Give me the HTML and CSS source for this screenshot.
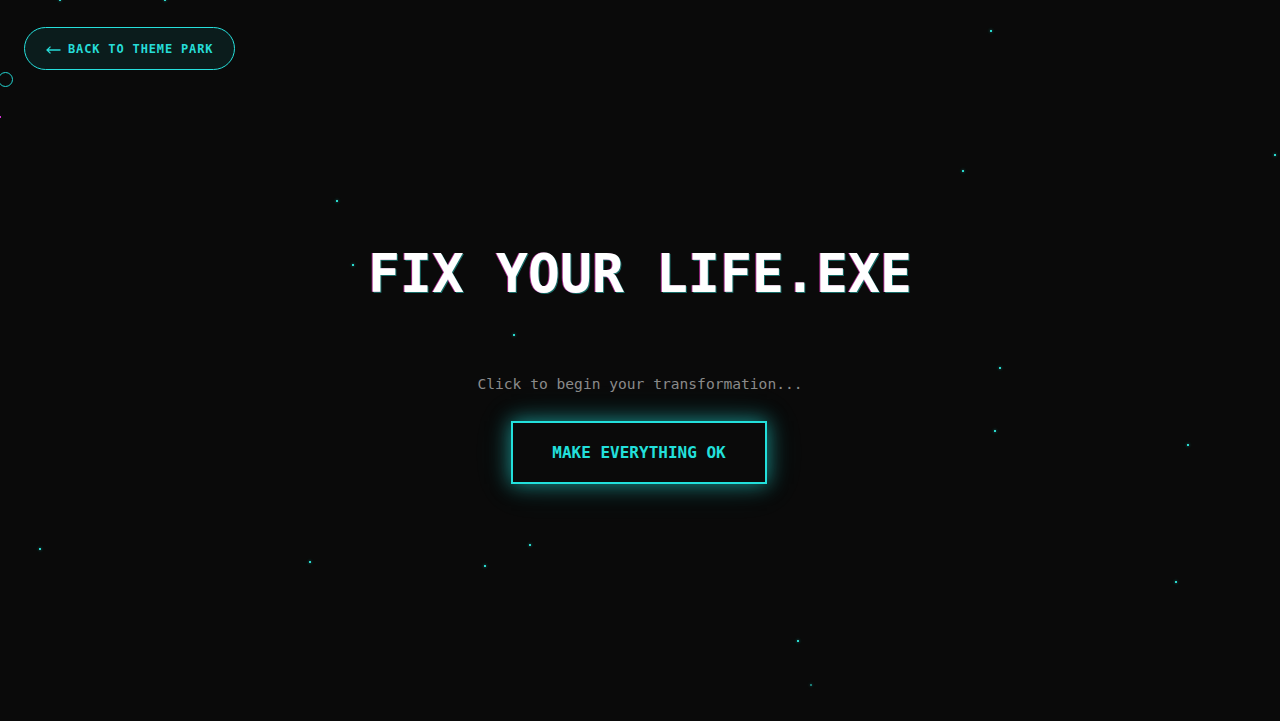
FILE: index.html
```html
<!DOCTYPE html>
<html lang="en">
<head>
<meta charset="utf-8">
<title>Fix Your Life.exe</title>
<link rel="stylesheet" href="styles.css">
</head>
<body>
<div class="stars" aria-hidden="true">
  <span class="star" style="left:59px;top:-1px"></span>
  <span class="star" style="left:164px;top:-1px"></span>
  <span class="star" style="left:990px;top:30px"></span>
  <span class="star" style="left:962px;top:170px"></span>
  <span class="star" style="left:1274px;top:154px"></span>
  <span class="star" style="left:336px;top:200px"></span>
  <span class="star" style="left:352px;top:264px"></span>
  <span class="star" style="left:513px;top:334px"></span>
  <span class="star" style="left:999px;top:367px"></span>
  <span class="star" style="left:994px;top:430px"></span>
  <span class="star" style="left:1187px;top:444px"></span>
  <span class="star" style="left:39px;top:548px"></span>
  <span class="star" style="left:309px;top:561px"></span>
  <span class="star" style="left:484px;top:565px"></span>
  <span class="star" style="left:529px;top:544px"></span>
  <span class="star" style="left:1175px;top:581px"></span>
  <span class="star" style="left:797px;top:640px"></span>
  <span class="star dim" style="left:810px;top:684px"></span>
  <span class="cursor-ring"></span>
  <span class="pink-dot"></span>
</div>

<a class="back" href="#">
  <svg class="back-arrow" width="15" height="8" viewBox="0 0 15 8" aria-hidden="true">
    <path d="M14.5 4H1M4.5 0.6L1 4l3.5 3.4" fill="none" stroke="currentColor" stroke-width="1.3"/>
  </svg>
  <span>BACK TO THEME PARK</span>
</a>

<main class="stage">
  <h1 class="title">FIX YOUR LIFE.EXE</h1>
  <p class="subtitle">Click to begin your transformation...</p>
  <button class="cta" type="button">MAKE EVERYTHING OK</button>
</main>
</body>
</html>
```

FILE: styles.css
```css
html, body {
  margin: 0;
  padding: 0;
  height: 100%;
}

body {
  background: #0a0a0a;
  color: #ffffff;
  font-family: "DejaVu Sans Mono", "Liberation Mono", monospace;
  overflow: hidden;
  position: relative;
}

.stars {
  position: absolute;
  inset: 0;
  pointer-events: none;
}

.star {
  position: absolute;
  width: 2px;
  height: 2px;
  background: #2ad8cc;
  box-shadow: 0 0 3px rgba(34, 220, 210, 0.6);
}

.star.dim {
  opacity: 0.55;
}

.cursor-ring {
  position: absolute;
  left: -2px;
  top: 72px;
  width: 15px;
  height: 15px;
  box-sizing: border-box;
  border: 1.5px solid #22d3d0;
  border-radius: 50%;
}

.pink-dot {
  position: absolute;
  left: -1px;
  top: 116px;
  width: 2px;
  height: 2px;
  background: #d633d6;
}

.back {
  position: absolute;
  left: 24px;
  top: 27px;
  box-sizing: border-box;
  width: 211px;
  height: 43px;
  display: flex;
  align-items: center;
  gap: 7px;
  padding: 0 0 0 21px;
  border: 1.5px solid #26e0dc;
  border-radius: 22px;
  background: #0b1c1c;
  color: #26dcd8;
  text-decoration: none;
  font-size: 12px;
  font-weight: bold;
  letter-spacing: 0.85px;
}

.back-arrow {
  margin-top: 3px;
  flex: none;
}

.stage {
  display: flex;
  flex-direction: column;
  align-items: center;
  padding-top: 247px;
  position: relative;
}

.title {
  margin: 0;
  font-size: 53px;
  line-height: 53px;
  font-weight: bold;
  letter-spacing: 0.1px;
  color: #ffffff;
  text-shadow: -1px 0 rgba(255, 60, 220, 0.6), 1px 1px rgba(40, 230, 220, 0.45);
}

.subtitle {
  margin: 75px 0 0;
  font-size: 14.6px;
  line-height: 18px;
  color: #8a8a8a;
}

.cta {
  margin-top: 28px;
  margin-right: 2px;
  box-sizing: border-box;
  width: 256px;
  height: 63px;
  background: #0a0a0a;
  border: 2px solid #22e0dc;
  color: #22e0dc;
  font-family: "DejaVu Sans Mono", "Liberation Mono", monospace;
  font-size: 16px;
  font-weight: bold;
  letter-spacing: 0;
  box-shadow: 0 0 18px rgba(34, 224, 220, 0.55), 0 0 36px rgba(34, 224, 220, 0.18);
  cursor: pointer;
}
```
